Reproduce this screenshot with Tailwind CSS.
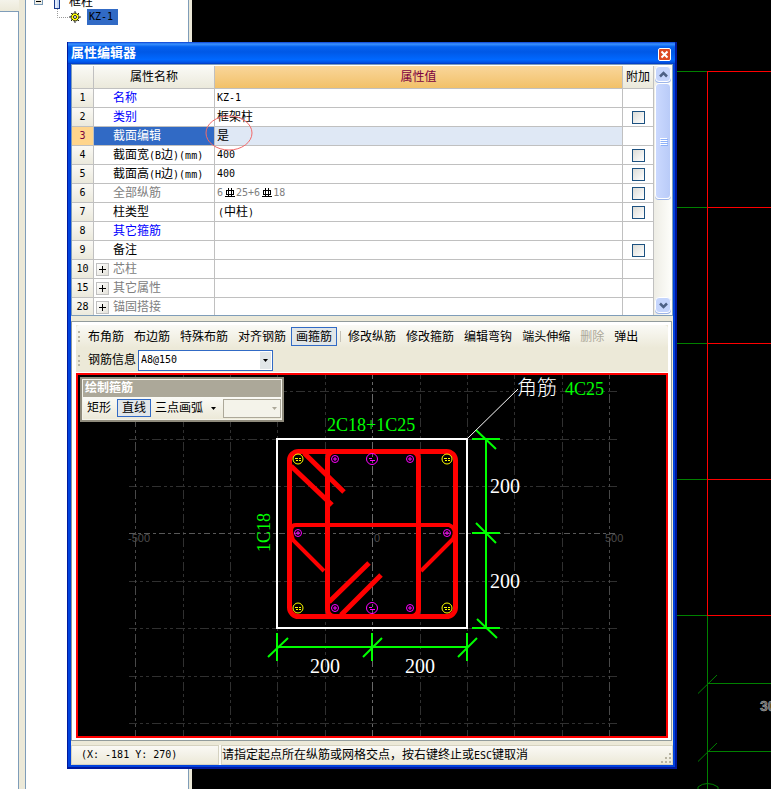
<!DOCTYPE html>
<html lang="zh-CN">
<head>
    <meta charset="UTF-8">
    <meta name="viewport" content="width=device-width, initial-scale=1.0">
    <title>属性编辑器</title>
    <script src="https://cdn.jsdelivr.net/npm/@tailwindcss/browser@4"></script>
</head>
<body class="h-screen overflow-hidden bg-black font-['DejaVu_Sans_Mono','Noto_Sans_CJK_SC',sans-serif] text-[12px] leading-[16px] text-black">
    <main class="relative flex h-full">

        <!-- docked side panels -->
        <aside class="flex w-[19px] shrink-0 flex-col">
            <div class="h-[11px] bg-gradient-to-b from-[#f4f3ea] to-[#ece9d8]"></div>
            <div class="flex-1 border-t border-r border-[#7f9db9] bg-white"></div>
        </aside>
        <div class="w-[6px] shrink-0 bg-[#ece9d8]"></div>
        <nav class="w-[164px] shrink-0 overflow-hidden border-x border-[#7f9db9] bg-white" aria-label="构件">
            <div class="-mt-[6px] flex h-[15px] items-center">
                <svg class="ml-[8px] shrink-0" width="32" height="15" viewBox="0 0 32 15">
                    <rect x=".5" y="2.500" width="8" height="8" fill="#f1efe6" stroke="#7898b5"/>
                    <path d="M2 7.500h5" stroke="#000"/>
                    <rect x="20.500" y="-3.500" width="5" height="18" fill="#c6d8f5" stroke="#173a8c"/>
                    <path d="M22 0v14" stroke="#fff"/>
                </svg>
                <span class="ml-[3px]">框柱</span>
            </div>
            <div class="flex h-[16px] items-center">
                <svg class="ml-[30px] shrink-0" width="31" height="16" viewBox="0 0 31 16">
                    <path d="M1.500 0v8.500h11" fill="none" stroke="#999" stroke-dasharray="1 1"/>
                    <circle cx="19" cy="8" r="4" fill="#ff0" stroke="#222" stroke-dasharray="2 1"/>
                    <circle cx="19" cy="8" r="1.500" fill="#fff" stroke="#222"/>
                    <path d="M19 2v3M19 11v3M13 8h3M22 8h3M15 4l2 2M23 4l-2 2M15 12l2-2M23 12l-2-2" stroke="#222"/>
                </svg>
                <a href="#" class="h-[16px] bg-[#316ac5] pr-[5px] pl-[2px] text-[10px]">KZ-1</a>
            </div>
        </nav>
        <div class="w-[3px] shrink-0 bg-[#ece9d8]"></div>

        <!-- axis grid of the plan view -->
        <svg class="h-full min-w-0 flex-1 bg-black" viewBox="192 0 579 789" preserveAspectRatio="xMinYMin slice" fill="none">
            <g stroke="#008000">
                <path d="M600 71.500H707M600 207.500H707M600 343.500H707M600 479.500H707M600 615.500H707"/>
                <path d="M707.500 615V789M707 683.500H900M707 751.500H900"/>
                <path d="M698 693.500L717 675M698 761.500L717 743"/>
                <path d="M698 789V787Q702 783.500 707.500 783.500T718 787V789"/>
            </g>
            <g stroke="#f00">
                <path d="M707.500 71V615M707 71.500H900M707 207.500H900M707 343.500H900M707 479.500H900M707 615.500H900"/>
            </g>
            <text x="760" y="711" fill="#606060" stroke="#b0b0b0" stroke-width=".5" font-family="Liberation Sans" font-weight="bold" font-size="14">30</text>
        </svg>

        <!-- property editor window -->
        <section class="absolute top-[42px] right-[94px] left-[67px] border-x-4 border-b-4 border-[#0042dd] bg-[#ece9d8] shadow-[inset_0_-1px_0_#fff]">
            <div class="pointer-events-none absolute -inset-x-[4px] top-0 -bottom-[4px] border-r-2 border-b-2 border-l border-[#00189c]"></div>
            <header class="-mx-[4px] flex h-[22px] items-center justify-between bg-linear-[to_bottom,#0a3fd0_0%,#3b92ff_9%,#0561ee_22%,#0058e6_45%,#0068ff_80%,#0055e8_92%,#0038c0_100%] pr-[6px] pl-[4px]">
                <h1 class="text-[13px] font-bold text-white">属性编辑器</h1>
                <button aria-label="关闭" class="mt-[3px] size-[13px] rounded-xs border border-white bg-[#dd4a22]">
                    <svg viewBox="0 0 11 11" class="size-[11px]"><path d="M2.500 2.500l6 6M8.500 2.500l-6 6" stroke="#fff" stroke-width="2"/></svg>
                </button>
            </header>

            <div class="flex h-[252px] border border-[#7f9db9] bg-white pt-px">
                <div class="min-w-0 flex-1 overflow-hidden">
                    <table class="w-full table-fixed border-separate border-spacing-0 [&_td]:h-[19px] [&_td]:border-r [&_td]:border-b [&_td]:border-[#c0c0c0] [&_td]:p-0 [&_td]:leading-[18px] [&_td_span]:leading-none [&_tbody_th]:border-r [&_tbody_th]:border-b [&_tbody_th]:border-[#c0c0c0] [&_tbody_th]:bg-gradient-to-b [&_tbody_th]:from-[#faf9f5] [&_tbody_th]:to-[#ebe9dc] [&_tbody_th]:p-0 [&_tbody_th]:text-[10px] [&_tbody_th]:leading-[18px] [&_tbody_th]:font-normal">
                        <colgroup>
                            <col class="w-[22px]"><col class="w-[121px]"><col><col class="w-[31px]">
                        </colgroup>
                        <thead>
                            <tr class="[&>*]:h-[23px] [&>*]:border-r [&>*]:border-b [&>*]:border-[#c0c0c0] [&>*]:bg-gradient-to-b [&>*]:from-[#fafaf6] [&>*]:to-[#ebe9db] [&>*]:p-0 [&>*]:font-normal">
                                <th></th>
                                <th>属性名称</th>
                                <th class="from-[#f9d69a]! to-[#f2c168]! text-[#7b003f]">属性值</th>
                                <th class="whitespace-nowrap">附加</th>
                            </tr>
                        </thead>
                        <tbody>
                            <tr>
                                <th>1</th>
                                <td class="pl-[19px]! text-[#0000ff]">名称</td>
                                <td class="pl-[2px]! text-[10px]">KZ-1</td>
                                <td></td>
                            </tr>
                            <tr>
                                <th>2</th>
                                <td class="pl-[19px]! text-[#0000ff]">类别</td>
                                <td class="pl-[2px]!">框架柱</td>
                                <td><input type="checkbox" aria-label="附加 类别" class="mx-auto block size-[13px] appearance-none border border-[#1c5180] bg-gradient-to-br from-[#dcdcd7] to-white"></td>
                            </tr>
                            <tr>
                                <th class="from-[#ffd58c]! to-[#ffd58c]! text-[#7b003f]">3</th>
                                <td class="bg-[#316ac5] pl-[19px]! text-white">截面编辑</td>
                                <td class="relative bg-[#dfe8f5] pl-[2px]!">是
                                    <!-- hand-drawn mark -->
                                    <svg class="pointer-events-none absolute -top-[12px] -left-[10px]" width="48" height="36" viewBox="0 0 48 36"><ellipse cx="24" cy="18" rx="23" ry="17" fill="none" stroke="#f26a6a"/></svg>
                                </td>
                                <td></td>
                            </tr>
                            <tr>
                                <th>4</th>
                                <td class="pl-[19px]! whitespace-nowrap">截面宽<span class="text-[10px]">(B</span>边<span class="text-[10px]">)(mm)</span></td>
                                <td class="pl-[2px]! text-[10px]">400</td>
                                <td><input type="checkbox" aria-label="附加 截面宽" class="mx-auto block size-[13px] appearance-none border border-[#1c5180] bg-gradient-to-br from-[#dcdcd7] to-white"></td>
                            </tr>
                            <tr>
                                <th>5</th>
                                <td class="pl-[19px]! whitespace-nowrap">截面高<span class="text-[10px]">(H</span>边<span class="text-[10px]">)(mm)</span></td>
                                <td class="pl-[2px]! text-[10px]">400</td>
                                <td><input type="checkbox" aria-label="附加 截面高" class="mx-auto block size-[13px] appearance-none border border-[#1c5180] bg-gradient-to-br from-[#dcdcd7] to-white"></td>
                            </tr>
                            <tr>
                                <th>6</th>
                                <td class="pl-[19px]! text-[#808080]">全部纵筋</td>
                                <td class="pl-[2px]! text-[10px] text-[#808080]">6<svg class="mr-[1px] ml-[2px] inline-block align-[-2px]" width="10" height="10" viewBox="0 0 10 10" fill="none" stroke="#000"><rect x="1.500" y="2.500" width="7" height="4"/><path d="M3.500 0v9M6.500 0v9M0 8.500h10"/></svg>25+6<svg class="mr-[1px] ml-[2px] inline-block align-[-2px]" width="10" height="10" viewBox="0 0 10 10" fill="none" stroke="#000"><rect x="1.500" y="2.500" width="7" height="4"/><path d="M3.500 0v9M6.500 0v9M0 8.500h10"/></svg>18</td>
                                <td><input type="checkbox" aria-label="附加 全部纵筋" class="mx-auto block size-[13px] appearance-none border border-[#1c5180] bg-gradient-to-br from-[#dcdcd7] to-white"></td>
                            </tr>
                            <tr>
                                <th>7</th>
                                <td class="pl-[19px]!">柱类型</td>
                                <td class="pl-[3px]!"><span class="text-[10px]">(</span>中柱<span class="text-[10px]">)</span></td>
                                <td><input type="checkbox" aria-label="附加 柱类型" class="mx-auto block size-[13px] appearance-none border border-[#1c5180] bg-gradient-to-br from-[#dcdcd7] to-white"></td>
                            </tr>
                            <tr>
                                <th>8</th>
                                <td class="pl-[19px]! text-[#0000ff]">其它箍筋</td>
                                <td></td>
                                <td></td>
                            </tr>
                            <tr>
                                <th>9</th>
                                <td class="pl-[19px]!">备注</td>
                                <td></td>
                                <td><input type="checkbox" aria-label="附加 备注" class="mx-auto block size-[13px] appearance-none border border-[#1c5180] bg-gradient-to-br from-[#dcdcd7] to-white"></td>
                            </tr>
                            <tr>
                                <th>10</th>
                                <td class="text-[#808080]"><div class="flex h-[18px] items-center gap-[4px] pl-[2px]"><button aria-label="展开" class="size-[13px] border border-[#c0c0c0] bg-gradient-to-br from-white to-[#e4e2da]"><svg viewBox="0 0 11 11" class="size-[11px]"><path d="M2 5.500h7M5.500 2v7" stroke="#000"/></svg></button>芯柱</div></td>
                                <td></td>
                                <td></td>
                            </tr>
                            <tr>
                                <th>15</th>
                                <td class="text-[#808080]"><div class="flex h-[18px] items-center gap-[4px] pl-[2px]"><button aria-label="展开" class="size-[13px] border border-[#c0c0c0] bg-gradient-to-br from-white to-[#e4e2da]"><svg viewBox="0 0 11 11" class="size-[11px]"><path d="M2 5.500h7M5.500 2v7" stroke="#000"/></svg></button>其它属性</div></td>
                                <td></td>
                                <td></td>
                            </tr>
                            <tr>
                                <th>28</th>
                                <td class="text-[#808080]"><div class="flex h-[18px] items-center gap-[4px] pl-[2px]"><button aria-label="展开" class="size-[13px] border border-[#c0c0c0] bg-gradient-to-br from-white to-[#e4e2da]"><svg viewBox="0 0 11 11" class="size-[11px]"><path d="M2 5.500h7M5.500 2v7" stroke="#000"/></svg></button>锚固搭接</div></td>
                                <td></td>
                                <td></td>
                            </tr>
                        </tbody>
                    </table>
                </div>
                <div class="flex w-[18px] flex-col bg-gradient-to-r from-[#eeede5] to-[#fefefb] px-[1px] pb-[2px]">
                    <button aria-label="向上" class="flex h-[16px] items-center justify-center rounded-sm border border-white bg-[#c5d5fc] shadow-[0_1px_0_#9db5e8]">
                        <svg width="9" height="7" viewBox="0 0 9 7"><path d="M1 5.500l3.500-3.500l3.500 3.500" fill="none" stroke="#4d6185" stroke-width="2.500"/></svg>
                    </button>
                    <div class="mt-[1px] flex h-[116px] flex-col items-center justify-center gap-px rounded-sm border border-white bg-gradient-to-r from-[#cbd9fe] to-[#b9cbf8] shadow-[0_1px_0_#9db5e8]">
                        <i class="h-px w-[7px] bg-white shadow-[1px_1px_0_#8cb0f8]"></i>
                        <i class="h-px w-[7px] bg-white shadow-[1px_1px_0_#8cb0f8]"></i>
                        <i class="h-px w-[7px] bg-white shadow-[1px_1px_0_#8cb0f8]"></i>
                        <i class="h-px w-[7px] bg-white shadow-[1px_1px_0_#8cb0f8]"></i>
                    </div>
                    <button aria-label="向下" class="mt-auto flex h-[16px] items-center justify-center rounded-sm border border-white bg-[#c5d5fc] shadow-[0_1px_0_#9db5e8]">
                        <svg width="9" height="7" viewBox="0 0 9 7"><path d="M1 1.500l3.500 3.500l3.500-3.500" fill="none" stroke="#4d6185" stroke-width="2.500"/></svg>
                    </button>
                </div>
            </div>

            <div class="mt-[5px] mr-px border border-[#919b9c] bg-white pt-[3px] pr-[3px] pb-[2px] pl-[4px]">
                <!-- toolbars -->
                <div class="bg-[#ece9d8]">
                    <div class="flex h-[23px] items-center overflow-hidden rounded-sm bg-gradient-to-b from-[#fafaf6] to-[#ece9d8] [&>button]:h-[19px] [&>button]:shrink-0 [&>button]:border [&>button]:border-transparent [&>button]:px-[4px]">
                        <i class="mr-[3px] ml-[2px] h-[11px] w-[2px] shrink-0 border-l-2 border-dotted border-[#b8b5a5]"></i>
                        <button>布角筋</button>
                        <button>布边筋</button>
                        <button>特殊布筋</button>
                        <button>对齐钢筋</button>
                        <button class="border-[#316ac5]! bg-[#e1e6e8]">画箍筋</button>
                        <i class="mr-[2px] ml-[3px] h-[11px] w-px shrink-0 bg-[#c5c2b8]"></i>
                        <button>修改纵筋</button>
                        <button>修改箍筋</button>
                        <button>编辑弯钩</button>
                        <button>端头伸缩</button>
                        <button disabled class="text-[#aca899]">删除</button>
                        <button>弹出</button>
                    </div>
                    <div class="flex h-[24px] items-center">
                        <i class="ml-[2px] h-[11px] w-[2px] shrink-0 border-l-2 border-dotted border-[#b8b5a5]"></i>
                        <label for="rebar" class="ml-[8px] pr-[2px]">钢筋信息</label>
                        <div class="relative w-[135px]">
                            <select id="rebar" class="block h-[21px] w-full appearance-none border border-[#316ac5] bg-white pl-[2px] text-[10px]">
                                <option>A8@150</option>
                            </select>
                            <div class="pointer-events-none absolute top-[2px] right-[2px] flex h-[17px] w-[11px] items-center justify-center bg-[#e1e6e8]">
                                <svg width="5" height="3" viewBox="0 0 5 3"><path d="M0 0h5l-2.500 3z"/></svg>
                            </div>
                        </div>
                    </div>
                </div>

                <!-- section drawing, origin at the column centre -->
                <div class="relative mt-px border-2 border-[#f00] bg-black">
                    <svg class="block h-[361px] w-full" viewBox="-294 -158 588 361" fill="none">
                        <g stroke="#303030" stroke-dasharray="9 3 3 3 3 3">
                            <path stroke-dashoffset="1" d="M-243-141.500H245M-243-93.500H245M-243-46.500H245M-243 48.500H245M-243 95.500H245M-243 143.500H245M-243 190.500H245"/>
                            <path stroke-dashoffset="5" d="M-188.500-158V203M-141.500-158V203M-94.500-158V203M-46.500-158V203M48.500-158V203M95.500-158V203M142.500-158V203M190.500-158V203"/>
                            <path stroke="#484848" stroke-dashoffset="5" d="M-236.500-158V203M237.500-158V203"/>
                            <path stroke="#686868" stroke-dashoffset="5" d="M.5-158V203"/>
                            <path stroke="#585858" stroke-dasharray="6 3 3 3" d="M-243 .5H245"/>
                        </g>
                        <g fill="#4c4c4c" font-family="Liberation Sans" font-size="11">
                            <text x="-244" y="9">-500</text>
                            <text x="2" y="9">0</text>
                            <text x="233" y="9">500</text>
                        </g>
                        <rect x="-95" y="-94" width="190" height="189" stroke="#fff" stroke-width="2"/>

                        <!-- stirrups and hooks -->
                        <g stroke="#f00" stroke-width="5">
                            <rect x="-82.500" y="-81.500" width="166" height="165" rx="9"/>
                            <rect x="-44.500" y="-81.500" width="91" height="165" rx="7"/>
                            <path stroke-width="4" d="M-48 38L-79 7Q-84-8-76-8H77Q86-4 81 6L49 38"/>
                            <path d="M-81-67L-40-28M-68-80L-28-41M-43 69L-3 30M-31 82L9 42"/>
                        </g>

                        <!-- bars -->
                        <g stroke="#ff0">
                            <circle cx="-74" cy="-74" r="5"/><circle cx="75" cy="-74" r="5"/>
                            <circle cx="-74" cy="75" r="5"/><circle cx="75" cy="75" r="5"/>
                            <path d="M-77-74.500h3M-76-72.500h2M-73-74.500h2M-73-72.500h2M72-74.500h3M73-72.500h2M76-74.500h2M76-72.500h2M-77 74.500h3M-76 76.500h2M-73 74.500h2M-73 76.500h2M72 74.500h3M73 76.500h2M76 74.500h2M76 76.500h2"/>
                        </g>
                        <g stroke="#f0f">
                            <circle cx="0" cy="-74" r="5.500"/><circle cx="0" cy="75" r="5.500"/>
                            <circle cx="-37" cy="-74" r="3.500"/><circle cx="38" cy="-74" r="3.500"/>
                            <circle cx="-74" cy="0" r="3.500"/><circle cx="75" cy="0" r="3.500"/>
                            <circle cx="-37" cy="75" r="3.500"/><circle cx="38" cy="75" r="3.500"/>
                            <path d="M-3-74.500h3M-2-72.500h5M-3 74.500h3M-2 76.500h5M-39-74h4M-37-76v4M36-74h4M38-76v4M-76 0h4M-74-2v4M73 0h4M75-2v4M-39 75h4M-37 73v4M36 75h4M38 73v4"/>
                        </g>

                        <!-- dimensions -->
                        <g stroke="#0f0" stroke-width="2">
                            <path d="M114-94V95M100-94H128M100 0H128M100 95H128M104-103L124-84M104-10L124 10M105 86L125 105"/>
                            <path d="M-95 114H95M-95 100V128M0 100V128M95 100V128M-104 124L-84 105M-9 124L10 105M86 124L105 105"/>
                        </g>
                        <path d="M95-94L146-144" stroke="#fff"/>
                        <g fill="#fff" font-family="Liberation Serif" font-size="20">
                            <text x="118" y="-40">200</text>
                            <text x="118" y="55">200</text>
                            <text x="-62" y="140">200</text>
                            <text x="33" y="140">200</text>
                            <text x="145" y="-138" font-family="Noto Sans CJK SC" font-weight="300">角筋</text>
                        </g>
                        <g fill="#0f0" font-family="Liberation Serif" font-size="18">
                            <text x="193" y="-138">4C25</text>
                            <text x="-45" y="-102">2C18+1C25</text>
                            <text transform="translate(-102 19) rotate(-90)">1C18</text>
                        </g>
                    </svg>

                    <!-- floating palette -->
                    <div class="absolute top-[2px] left-[2px] w-[204px] border-2 border-[#8f8b7c] bg-[#f4f3ea] p-px">
                        <h2 class="h-[17px] bg-[#aca899] px-[2px] font-bold text-white">绘制箍筋</h2>
                        <div class="flex h-[22px] items-center bg-gradient-to-b from-[#fafaf6] to-[#ece9d8] [&>button]:h-[18px] [&>button]:shrink-0 [&>button]:border [&>button]:border-transparent [&>button]:px-[4px]">
                            <button class="px-[3px]!">矩形</button>
                            <button class="ml-[2px] border-[#316ac5]! bg-[#e1e6e8]">直线</button>
                            <button class="px-[3px]!">三点画弧</button>
                            <svg class="mx-[4px] shrink-0" width="5" height="3" viewBox="0 0 5 3"><path d="M0 0h5l-2.500 3z"/></svg>
                            <div class="relative ml-auto w-[58px]">
                                <select disabled aria-label="弧类型" class="block h-[19px] w-full appearance-none border border-[#aca899] bg-[#f4f3ea]"></select>
                                <svg class="pointer-events-none absolute top-[8px] right-[4px]" width="5" height="3" viewBox="0 0 5 3"><path d="M0 0h5l-2.500 3z" fill="#aca899"/></svg>
                            </div>
                        </div>
                    </div>
                </div>
            </div>

            <!-- status bar -->
            <footer class="mt-[4px] flex h-[20px] items-stretch gap-[2px] bg-[#fcfbf7]">
                <div class="w-[148px] shrink-0 border border-[#d5d2c0] bg-gradient-to-b from-[#faf9f5] to-[#ece9d8] pl-[9px] text-[10px] leading-[18px] whitespace-pre">(X: -181 Y: 270)</div>
                <div class="relative min-w-0 flex-1 overflow-hidden border border-[#d5d2c0] bg-gradient-to-b from-[#faf9f5] to-[#ece9d8] leading-[18px] whitespace-nowrap">请指定起点所在纵筋或网格交点，按右键终止或<span class="text-[10px]">ESC</span>键取消
                    <svg class="absolute right-0 bottom-0" width="12" height="12" viewBox="0 0 12 12" fill="#b8b4a2"><path d="M9 1h2v2h-2zM5 5h2v2h-2zM9 5h2v2h-2zM1 9h2v2h-2zM5 9h2v2h-2zM9 9h2v2h-2z"/></svg>
                </div>
            </footer>
        </section>
    </main>
</body>
</html>
